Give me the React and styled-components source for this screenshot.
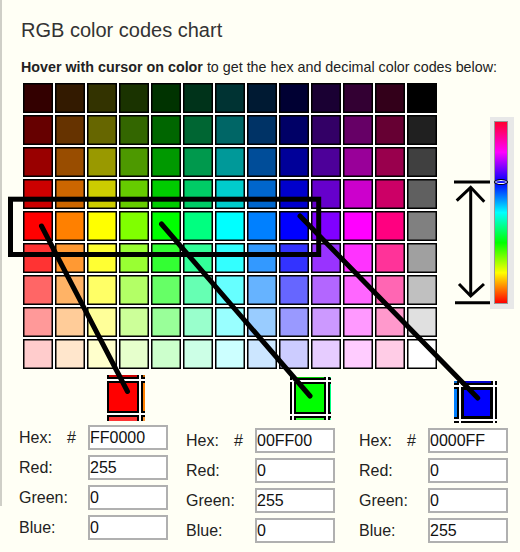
import React from 'react';
import styled, { createGlobalStyle } from 'styled-components';

const GlobalStyle = createGlobalStyle`
  html, body { margin: 0; padding: 0; background: #fffff5; }
  body { font-family: "Liberation Sans", Arial, sans-serif; }
`;

const HUES = [0, 30, 60, 90, 120, 150, 180, 210, 240, 270, 300, 330];
const GRAYS = [0, 32, 64, 96, 128, 160, 192, 224, 255];

function hueRGB(h) {
  const f = (n) => {
    const k = (n + h / 60) % 6;
    return 1 - Math.max(0, Math.min(k, 4 - k, 1));
  };
  return [f(5), f(3), f(1)];
}

function cellColor(row, col) {
  if (col === 12) {
    const g = GRAYS[row];
    return `rgb(${g},${g},${g})`;
  }
  const base = hueRGB(HUES[col]);
  let rgb;
  if (row < 4) {
    const m = (row + 1) * 0.2;
    rgb = base.map((c) => c * m);
  } else {
    const t = (row - 4) * 0.2;
    rgb = base.map((c) => c + (1 - c) * t);
  }
  const [r, g, b] = rgb.map((c) => Math.round(c * 255));
  return `rgb(${r},${g},${b})`;
}

const Page = styled.div`
  position: relative;
  width: 520px;
  height: 552px;
  overflow: hidden;
  box-sizing: border-box;
  padding: 19px 0 0 19px;
  &::before {
    content: '';
    position: absolute;
    left: 0;
    top: 0;
    width: 2px;
    height: 506px;
    background: #cfcfc7;
  }
`;

const Title = styled.h1`
  margin: 0 0 0 2px;
  font-size: 20px;
  line-height: 23px;
  font-weight: normal;
  color: #333;
`;

const Lead = styled.p`
  margin: 17px 0 0 2px;
  font-size: 14.3px;
  line-height: 17px;
  color: #222;
  white-space: nowrap;
  b { font-weight: bold; }
`;

const ChartRow = styled.div`
  display: flex;
  align-items: flex-start;
  margin-top: 7px;
`;

const Chart = styled.div`
  display: grid;
  grid-template-columns: repeat(13, 30px);
  grid-auto-rows: 30px;
  gap: 2px;
  margin-left: 4px;
  background: #fff;
`;

const Cell = styled.div`
  box-sizing: border-box;
  border: 1px solid #000;
  box-shadow: inset 0 0 0 0.5px #000;
  background: ${(p) => p.$c};
`;

const SliderFrame = styled.div`
  position: relative;
  width: 24px;
  height: 192px;
  box-sizing: border-box;
  margin: 34px 0 0 53px;
  padding: 4px 6px 5px 4px;
  background: #e8e8e8;
`;

const SliderBar = styled.div`
  position: relative;
  height: 100%;
  box-sizing: border-box;
  border: 1px solid #999;
  background: linear-gradient(
    to bottom,
    #ff0030 0%,
    #ff00ff 16.7%,
    #0000ff 33.3%,
    #00ffff 50%,
    #00ff00 66.7%,
    #ffff00 83.3%,
    #ff0000 100%
  );
`;

const Thumb = styled.div`
  position: absolute;
  left: -1px;
  right: -1px;
  top: 57px;
  height: 6px;
  box-sizing: border-box;
  border: 1px solid #000;
  border-radius: 50%;
  background: #1010ff;
  box-shadow: inset 0 0 0 1px #fff;
`;

const MagRow = styled.div`
  display: flex;
  align-items: flex-start;
  height: 56px;
`;

const MagView = styled.div`
  flex: none;
  width: ${(p) => p.$w}px;
  height: ${(p) => p.$h}px;
  margin: ${(p) => p.$top}px 0 0 ${(p) => p.$left}px;
  overflow: hidden;
  background: #fff;
`;

const MagGrid = styled.div`
  display: grid;
  grid-template-columns: repeat(3, 32px);
  grid-auto-rows: 32px;
  gap: 2px;
  margin-left: ${(p) => p.$x - 34}px;
  margin-top: ${(p) => p.$y - 34}px;
`;

const MagCell = styled.div`
  box-sizing: border-box;
  border: ${(p) => (p.$c ? `${p.$b}px solid #000` : 'none')};
  background: ${(p) => p.$c || '#fff'};
`;

const Form = styled.div`
  display: flex;
  align-items: flex-start;
`;

const Column = styled.div`
  display: grid;
  grid-template-columns: 48px 21px 80px;
  grid-auto-rows: 25px;
  row-gap: 5px;
  align-items: center;
  margin: ${(p) => p.$mt}px 0 0 ${(p) => p.$ml}px;
`;

const Label = styled.span`
  font-size: 16px;
  color: #222;
  white-space: nowrap;
`;

const Field = styled.input`
  width: 80px;
  height: 25px;
  box-sizing: border-box;
  border: 2px solid #b0b0b0;
  padding: 0;
  margin: 0;
  background: #fff;
  font-family: "Liberation Sans", Arial, sans-serif;
  font-size: 16px;
  color: #111;
  outline: none;
`;

const Overlay = styled.svg`
  position: absolute;
  left: 0;
  top: 0;
  pointer-events: none;
`;

function Magnifier({ row, col, w, h, top, left, x, y, b }) {
  const cells = [];
  for (let dr = -1; dr <= 1; dr++) {
    for (let dc = -1; dc <= 1; dc++) {
      const r = row + dr;
      const c = col + dc;
      const valid = r >= 0 && r < 9 && c >= 0 && c < 13;
      cells.push(
        <MagCell
          key={`${dr}-${dc}`}
          $c={valid ? cellColor(r, c) : null}
          $b={dr === 0 && dc === 0 ? b : 2}
        />
      );
    }
  }
  return (
    <MagView $w={w} $h={h} $top={top} $left={left}>
      <MagGrid $x={x} $y={y}>{cells}</MagGrid>
    </MagView>
  );
}

function CodeColumn({ hex, r, g, b, ml, mt }) {
  return (
    <Column $ml={ml} $mt={mt}>
      <Label>Hex:</Label>
      <Label>#</Label>
      <Field readOnly value={hex} />
      <Label>Red:</Label>
      <span />
      <Field readOnly value={r} />
      <Label>Green:</Label>
      <span />
      <Field readOnly value={g} />
      <Label>Blue:</Label>
      <span />
      <Field readOnly value={b} />
    </Column>
  );
}

export default function App() {
  const cells = [];
  for (let r = 0; r < 9; r++) {
    for (let c = 0; c < 13; c++) {
      cells.push(<Cell key={`${r}-${c}`} $c={cellColor(r, c)} />);
    }
  }
  return (
    <>
      <GlobalStyle />
      <Page>
        <Title>RGB color codes chart</Title>
        <Lead>
          <b>Hover with cursor on color</b> to get the hex and decimal color codes below:
        </Lead>
        <ChartRow>
          <Chart>{cells}</Chart>
          <SliderFrame>
            <SliderBar>
              <Thumb />
            </SliderBar>
          </SliderFrame>
        </ChartRow>
        <MagRow>
          <Magnifier row={4} col={0} w={38} h={46} top={6} left={88} x={0} y={6} b={2} />
          <Magnifier row={4} col={4} w={41} h={43} top={8} left={145} x={4} y={5} b={2} />
          <Magnifier row={4} col={8} w={43} h={42} top={12} left={123} x={7} y={6} b={3} />
        </MagRow>
        <Form>
          <CodeColumn hex="FF0000" r="255" g="0" b="0" ml={0} mt={0} />
          <CodeColumn hex="00FF00" r="0" g="255" b="0" ml={18} mt={3} />
          <CodeColumn hex="0000FF" r="0" g="0" b="255" ml={24} mt={3} />
        </Form>
        <Overlay width="520" height="552" viewBox="0 0 520 552">
          <g fill="none" stroke="#000">
            <rect x="10.5" y="199.2" width="308.2" height="55.3" strokeWidth="5" />
            <g strokeWidth="5" strokeLinecap="round">
              <line x1="41.5" y1="226" x2="127.5" y2="391.5" />
              <line x1="161.5" y1="224" x2="310" y2="396" />
              <line x1="300" y1="216" x2="477.7" y2="398" />
            </g>
            <g strokeWidth="3">
              <line x1="454" y1="182" x2="490" y2="182" />
              <line x1="455" y1="302.7" x2="490" y2="302.7" />
              <line x1="470.7" y1="188" x2="470.7" y2="295" />
              <polyline points="456.7,200.7 470.7,187.3 484.3,201.7" />
              <polyline points="459,284 470.7,296 484,284" />
            </g>
          </g>
        </Overlay>
      </Page>
    </>
  );
}
